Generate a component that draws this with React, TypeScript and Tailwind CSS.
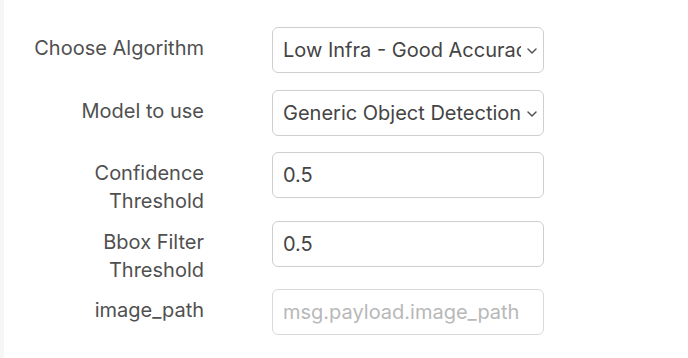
import React, { useState } from 'react';

const labelCls =
  'w-[200px] shrink-0 text-right pt-[7px] text-[20px] leading-[28px] text-[#505050]';
const boxCls =
  'w-[272px] h-[46px] rounded-[6px] border border-[#cfcfcf] bg-white px-[10px] text-[20px] text-[#444] outline-none';

const Chevron: React.FC = () => (
  <svg
    width="10"
    height="6"
    viewBox="0 0 10 6"
    fill="none"
    className="absolute right-[7px] top-[21px] pointer-events-none"
  >
    <path d="M1 1l4 4 4-4" stroke="#555" strokeWidth="1.5" strokeLinecap="round" strokeLinejoin="round" />
  </svg>
);

const App: React.FC = () => {
  const [algorithm, setAlgorithm] = useState('low');
  const [model, setModel] = useState('generic');
  const [confidence, setConfidence] = useState('0.5');
  const [bbox, setBbox] = useState('0.5');

  return (
    <div
      className="w-[688px] h-[358px] bg-white flex"
      style={{ fontFamily: 'Inter, "Noto Sans", sans-serif' }}
    >
      <div className="w-[4px] h-full bg-[#f6f6f6]" />
      <div className="flex flex-col pt-[27px]">
        <div className="flex gap-[68px] h-[63px]">
          <label className={labelCls}>Choose Algorithm</label>
          <div className="relative">
            <select
              value={algorithm}
              onChange={(e) => setAlgorithm(e.target.value)}
              className={`${boxCls} appearance-none pr-[22px] text-clip`}
            >
              <option value="low">Low Infra - Good Accuracy</option>
              <option value="high">High Infra - Best Accuracy</option>
            </select>
            <Chevron />
          </div>
        </div>

        <div className="flex gap-[68px] h-[62px]">
          <label className={labelCls}>Model to use</label>
          <div className="relative">
            <select
              value={model}
              onChange={(e) => setModel(e.target.value)}
              className={`${boxCls} appearance-none pr-[22px] text-clip`}
            >
              <option value="generic">Generic Object Detection</option>
            </select>
            <Chevron />
          </div>
        </div>

        <div className="flex gap-[68px] h-[69px]">
          <label className={labelCls}>
            Confidence
            <br />
            Threshold
          </label>
          <input
            type="text"
            value={confidence}
            onChange={(e) => setConfidence(e.target.value)}
            className={boxCls}
          />
        </div>

        <div className="flex gap-[68px] h-[68px]">
          <label className={labelCls}>
            Bbox Filter
            <br />
            Threshold
          </label>
          <input
            type="text"
            value={bbox}
            onChange={(e) => setBbox(e.target.value)}
            className={boxCls}
          />
        </div>

        <div className="flex gap-[68px]">
          <label className={labelCls}>image_path</label>
          <input
            type="text"
            disabled
            placeholder="msg.payload.image_path"
            className={`${boxCls} bg-[#f7f7f7] placeholder:text-[#b8b8b8] border-[#d9d9d9]`}
          />
        </div>
      </div>
    </div>
  );
};

export default App;
